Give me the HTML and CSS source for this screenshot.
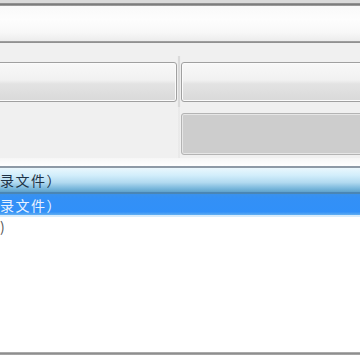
FILE: index.html
```html
<!DOCTYPE html>
<html>
<head>
<meta charset="utf-8">
<link rel="stylesheet" href="styles.css">
</head>
<body>
<div class="window">
  <div class="top-edge"></div>
  <div class="top-line"></div>
  <div class="toolbar"></div>
  <div class="sep"></div>
  <div class="panel">
    <div class="btn-row">
      <div class="btn btn-left"></div>
      <div class="splitter"></div>
      <div class="btn btn-right"></div>
    </div>
    <div class="btn-row second">
      <div class="blank"></div>
      <div class="splitter faint"></div>
      <div class="btn btn-right disabled"></div>
    </div>
  </div>
  <div class="gap-white"></div>
  <div class="list">
    <div class="list-header"><span class="txt">录文件）</span></div>
    <div class="row selected"><span class="txt">录文件）</span></div>
    <div class="row plain"><span class="txt">)</span></div>
    <div class="filler"></div>
    <div class="bottom-line"></div>
  </div>
</div>
</body>
</html>
```

FILE: styles.css
```css
html, body {
  margin: 0;
  padding: 0;
  background: #ffffff;
}
.window {
  width: 360px;
  height: 360px;
  overflow: hidden;
  display: flex;
  flex-direction: column;
  font-family: "Noto Sans CJK SC", "Noto Sans", sans-serif;
}
.top-edge { height: 3px; background: #d9d9d9; flex: none; }
.top-line { height: 3px; background: linear-gradient(#9a9a9a, #7c7c7c, #a8a8a8); flex: none; }
.toolbar {
  height: 35px;
  flex: none;
  background: linear-gradient(#f9f9f9, #fdfdfd 40%, #f8f8f8 75%, #ececec);
}
.sep { height: 2px; flex: none; background: linear-gradient(#a5a5a5, #8a8a8a); }
.panel {
  flex: none;
  background: #f0f0f0;
  padding: 19px 0 3px;
  display: flex;
  flex-direction: column;
  gap: 11px;
}
.btn-row {
  display: grid;
  grid-template-columns: 177px 4px 1fr;
  height: 40px;
}
.btn-row.second { height: 42px; }
.splitter {
  margin: -6px 0;
  background: linear-gradient(90deg, #f8f8f8, #d0d0d0 50%, #f8f8f8);
}
.splitter.faint {
  background: linear-gradient(90deg, #f4f4f4, #e6e6e6 50%, #f4f4f4);
}
.btn {
  box-sizing: border-box;
  border: 1px solid #a0a0a0;
  border-radius: 3px;
  background: linear-gradient(#f8f8f8, #f1f1f1 45%, #e3e3e3 55%, #d9d9d9);
  box-shadow: inset 0 0 0 1px #fbfbfb;
}
.btn-left { margin-left: -6px; }
.btn-right { margin-right: -6px; }
.btn.disabled {
  background: #cdcdcd;
  border-color: #b4b4b4;
  box-shadow: inset 0 0 0 1px #e6e6e6;
}
.gap-white { height: 8px; flex: none; background: linear-gradient(#f6f6f6, #ffffff); }
.list {
  flex: 1;
  display: flex;
  flex-direction: column;
  background: #ffffff;
}
.txt {
  font-size: 14px;
  letter-spacing: 1.5px;
  white-space: nowrap;
}
.list-header {
  height: 28px;
  flex: none;
  box-sizing: border-box;
  border-top: 2px solid #8e9aa6;
  border-bottom: 2px solid #4a86b4;
  background: linear-gradient(#eaf7fd, #d2eefb 30%, #b2daf0 60%, #7ab8dc 85%, #5fa2cc);
  color: #1e3246;
  display: flex;
  align-items: center;
}
.row {
  flex: none;
  display: flex;
  align-items: center;
}
.row.selected {
  height: 21px;
  background: linear-gradient(#3a92ec, #3390f6 20%, #3190f8 85%, #62aef0);
  color: #e8f2ff;
  border-bottom: 2px solid #d8ecfb;
}
.row.plain {
  height: 18px;
  color: #555;
}
.filler { flex: 1; }
.bottom-line {
  height: 3px;
  flex: none;
  background: linear-gradient(#b8b8b8, #8e8e8e, #b0b0b0);
  margin-bottom: 5px;
}
```
